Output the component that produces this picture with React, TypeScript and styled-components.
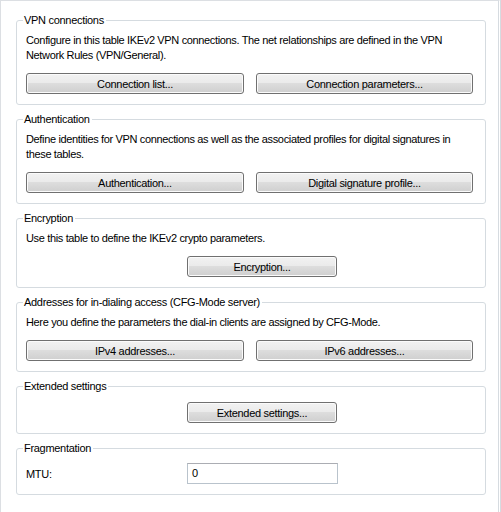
import React from "react";
import styled, { createGlobalStyle } from "styled-components";

const GlobalStyle = createGlobalStyle`
  html, body {
    margin: 0;
    padding: 0;
    background: #ffffff;
  }
  body {
    font-family: "Liberation Sans", Arial, sans-serif;
    font-size: 11px;
    color: #000000;
  }
`;

const Frame = styled.div`
  box-sizing: border-box;
  width: 501px;
  height: 512px;
  border-left: 1px solid #dcdfe3;
  border-top: 1px solid #dcdfe3;
  border-right: 3px double #d6dbe0;
  padding: 13px 11px 0 15px;
  display: flex;
  flex-direction: column;
  gap: 8px;
  overflow: hidden;
`;

const Group = styled.fieldset`
  box-sizing: border-box;
  margin: 0;
  width: 470px;
  border: 1px solid #d5dbe0;
  border-radius: 3px;
  padding: 6px 12px 10px 9px;
  display: flex;
  flex-direction: column;
  min-width: 0;
`;

const Legend = styled.legend`
  padding: 0 2px 0 1px;
  margin-left: -3px;
  line-height: 13px;
  letter-spacing: -0.3px;
`;

const Description = styled.p`
  margin: 0 0 10px 0;
  line-height: 15px;
  letter-spacing: -0.35px;
`;

const ButtonRow = styled.div`
  display: grid;
  grid-template-columns: 218px 217px;
  column-gap: 12px;
`;

const FieldRow = styled.div<{ $top?: number }>`
  display: grid;
  grid-template-columns: 161px 151px;
  align-items: center;
  margin-top: ${(p) => p.$top ?? 0}px;
`;

const Button = styled.button<{ $width?: number }>`
  box-sizing: border-box;
  height: 21px;
  width: ${(p) => (p.$width ? `${p.$width}px` : "100%")};
  border: 1px solid #707070;
  border-radius: 3px;
  background: linear-gradient(
    to bottom,
    #f2f2f2 0%,
    #ebebeb 45%,
    #dddddd 50%,
    #cfcfcf 100%
  );
  box-shadow: inset 0 0 0 1px #fbfbfb;
  font-family: "Liberation Sans", Arial, sans-serif;
  font-size: 11px;
  letter-spacing: -0.3px;
  color: #000000;
  padding: 0;
`;

const Label = styled.span`
  letter-spacing: -0.3px;
`;

const Input = styled.div`
  box-sizing: border-box;
  height: 21px;
  border: 1px solid #b9c3cc;
  border-top-color: #abadb3;
  background: #ffffff;
  padding: 0 4px;
  line-height: 19px;
`;

const App: React.FC = () => {
  return (
    <>
      <GlobalStyle />
      <Frame>
        <Group>
          <Legend>VPN connections</Legend>
          <Description>
            Configure in this table IKEv2 VPN connections. The net relationships
            are defined in the VPN Network Rules (VPN/General).
          </Description>
          <ButtonRow>
            <Button>Connection list...</Button>
            <Button>Connection parameters...</Button>
          </ButtonRow>
        </Group>

        <Group>
          <Legend>Authentication</Legend>
          <Description>
            Define identities for VPN connections as well as the associated
            profiles for digital signatures in these tables.
          </Description>
          <ButtonRow>
            <Button>Authentication...</Button>
            <Button>Digital signature profile...</Button>
          </ButtonRow>
        </Group>

        <Group>
          <Legend>Encryption</Legend>
          <Description>
            Use this table to define the IKEv2 crypto parameters.
          </Description>
          <FieldRow>
            <span />
            <Button $width={150}>Encryption...</Button>
          </FieldRow>
        </Group>

        <Group>
          <Legend>Addresses for in-dialing access (CFG-Mode server)</Legend>
          <Description>
            Here you define the parameters the dial-in clients are assigned by
            CFG-Mode.
          </Description>
          <ButtonRow>
            <Button>IPv4 addresses...</Button>
            <Button>IPv6 addresses...</Button>
          </ButtonRow>
        </Group>

        <Group>
          <Legend>Extended settings</Legend>
          <FieldRow $top={3}>
            <span />
            <Button $width={150}>Extended settings...</Button>
          </FieldRow>
        </Group>

        <Group>
          <Legend>Fragmentation</Legend>
          <FieldRow $top={2}>
            <Label>MTU:</Label>
            <Input>0</Input>
          </FieldRow>
        </Group>
      </Frame>
    </>
  );
};

export default App;
